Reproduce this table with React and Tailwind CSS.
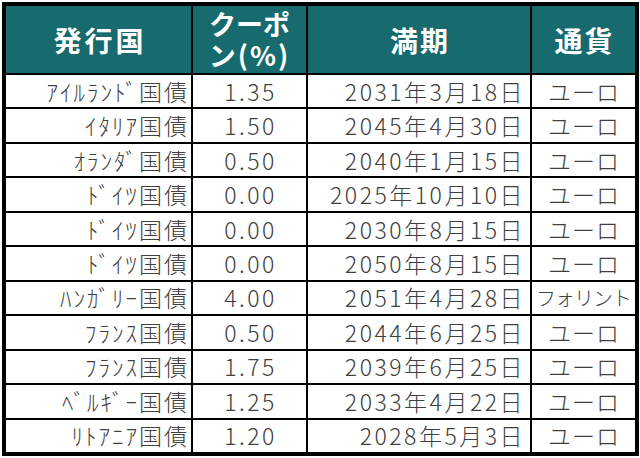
const bonds = [
  ["ｱｲﾙﾗﾝﾄﾞ国債", "1.35", "2031年3月18日", "ユーロ"],
  ["ｲﾀﾘｱ国債", "1.50", "2045年4月30日", "ユーロ"],
  ["ｵﾗﾝﾀﾞ国債", "0.50", "2040年1月15日", "ユーロ"],
  ["ﾄﾞｲﾂ国債", "0.00", "2025年10月10日", "ユーロ"],
  ["ﾄﾞｲﾂ国債", "0.00", "2030年8月15日", "ユーロ"],
  ["ﾄﾞｲﾂ国債", "0.00", "2050年8月15日", "ユーロ"],
  ["ﾊﾝｶﾞﾘｰ国債", "4.00", "2051年4月28日", "フォリント"],
  ["ﾌﾗﾝｽ国債", "0.50", "2044年6月25日", "ユーロ"],
  ["ﾌﾗﾝｽ国債", "1.75", "2039年6月25日", "ユーロ"],
  ["ﾍﾞﾙｷﾞｰ国債", "1.25", "2033年4月22日", "ユーロ"],
  ["ﾘﾄｱﾆｱ国債", "1.20", "2028年5月3日", "ユーロ"],
];

const font = { fontFamily: '"Noto Sans CJK JP", "Noto Sans", sans-serif' };

function Head({ children, className = "" }) {
  return (
    <div
      className={`bg-[#176a6d] text-white font-bold flex justify-center overflow-hidden ${className}`}
    >
      {children}
    </div>
  );
}

export default function App() {
  return (
    <div className="bg-white w-[640px] h-[458px] pt-[2px] pl-[2px]" style={font}>
      <div className="w-[637px] h-[454px] border-4 border-black bg-black grid gap-[2px] grid-cols-[185px_113px_222px_103px] grid-rows-[67px_repeat(11,1fr)]">
        <Head className="items-center text-[28px] tracking-[3px] pl-[3px]">発行国</Head>
        <Head className="items-start pt-[2px] text-[27px] leading-[31px] text-center">
          <div>
            クーポ
            <br />
            <span className="tracking-[2px]">ン(%)</span>
          </div>
        </Head>
        <Head className="items-center text-[28px] tracking-[2px] pl-[2px]">満期</Head>
        <Head className="items-center text-[28px] tracking-[2px] pl-[2px]">通貨</Head>

        {bonds.map((b, i) => (
          <div key={i} className="contents text-[23px] text-[#404040] font-light tracking-[2px] leading-none">
            <div className="bg-white flex items-center justify-end pr-[2px]">{b[0]}</div>
            <div className="bg-white flex items-center justify-center pl-[2px] tracking-[2.5px]">{b[1]}</div>
            <div className="bg-white flex items-center justify-end pr-[5px] tracking-[2.5px]">{b[2]}</div>
            {b[3] === "フォリント" ? (
              <div className="bg-white flex items-center justify-center whitespace-nowrap text-[20px] tracking-[-1px]">
                {b[3]}
              </div>
            ) : (
              <div className="bg-white flex items-center justify-center pl-[1px] tracking-[1px]">{b[3]}</div>
            )}
          </div>
        ))}
      </div>
    </div>
  );
}
